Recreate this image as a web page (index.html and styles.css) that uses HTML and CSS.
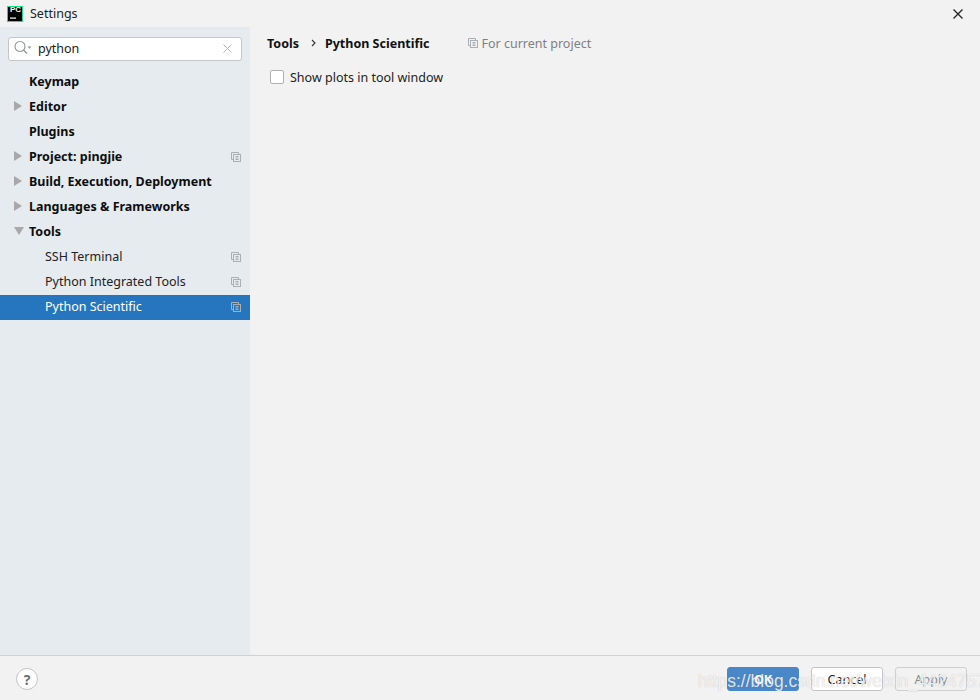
FILE: index.html
```html
<!DOCTYPE html>
<html lang="en">
<head>
<meta charset="utf-8">
<title>Settings</title>
<link rel="stylesheet" href="styles.css">
</head>
<body>
<div class="window">
  <header class="titlebar">
    <svg class="logo" width="16" height="16" viewBox="0 0 16 16"><rect x="0.5" y="0.5" width="15" height="15" fill="#000" stroke="#21d789"/><rect x="3" y="11.5" width="6" height="1.2" fill="#fff"/></svg>
    <span class="logo-text">PC</span>
    <span class="title">Settings</span>
    <svg class="close" width="12" height="12" viewBox="0 0 12 12"><path d="M1.5 1.5l9 9M10.500 1.500l-9 9" stroke="#222" stroke-width="1.300" fill="none"/></svg>
  </header>
  <div class="main">
    <aside class="sidebar">
      <div class="search">
        <svg class="search-icon" width="18" height="16" viewBox="0 0 18 16"><circle cx="6" cy="6.500" r="5" fill="none" stroke="#8f9498" stroke-width="1.100"/><path d="M9.500 10l3.500 3.500" stroke="#8f9498" stroke-width="1.300"/><path d="M13.500 6.500h4l-2 2.200z" fill="#8f9498"/></svg>
        <span class="search-text">python</span>
        <svg class="search-clear" width="9" height="9" viewBox="0 0 9 9"><path d="M.5.500l8 8M8.500.500l-8 8" stroke="#b4b8bb" stroke-width="1"/></svg>
      </div>
      <nav class="tree">
        <div class="row top"><span class="label">Keymap</span></div>
        <div class="row top"><span class="arrow right"></span><span class="label">Editor</span></div>
        <div class="row top"><span class="label">Plugins</span></div>
        <div class="row top"><span class="arrow right"></span><span class="label">Project: pingjie</span>
          <svg class="copy" width="10" height="10" viewBox="0 0 10 10"><use href="#copy-icon"/></svg></div>
        <div class="row top"><span class="arrow right"></span><span class="label">Build, Execution, Deployment</span></div>
        <div class="row top"><span class="arrow right"></span><span class="label">Languages &amp; Frameworks</span></div>
        <div class="row top"><span class="arrow down"></span><span class="label">Tools</span></div>
        <div class="row sub"><span class="label">SSH Terminal</span>
          <svg class="copy" width="10" height="10" viewBox="0 0 10 10"><use href="#copy-icon"/></svg></div>
        <div class="row sub"><span class="label">Python Integrated Tools</span>
          <svg class="copy" width="10" height="10" viewBox="0 0 10 10"><use href="#copy-icon"/></svg></div>
        <div class="row sub selected"><span class="label">Python Scientific</span>
          <svg class="copy" width="10" height="10" viewBox="0 0 10 10"><use href="#copy-icon"/></svg></div>
      </nav>
    </aside>
    <main class="content">
      <div class="crumbs">
        <span class="crumb">Tools</span>
        <svg class="chev" width="5" height="8" viewBox="0 0 5 8"><path d="M1 1l3 3-3 3" fill="none" stroke="#333" stroke-width="1.100"/></svg>
        <span class="crumb">Python Scientific</span>
        <svg class="copy crumb-copy" width="10" height="10" viewBox="0 0 10 10"><use href="#copy-icon"/></svg>
        <span class="scope">For current project</span>
      </div>
      <label class="check-row"><span class="checkbox"></span><span>Show plots in tool window</span></label>
    </main>
  </div>
  <footer class="footer">
    <span class="help">?</span>
    <div class="buttons">
      <span class="btn primary">OK</span>
      <span class="btn">Cancel</span>
      <span class="btn disabled">Apply</span>
    </div>
  </footer>
  <div class="watermark">https://blog.csdn.net/weixin_44247573</div>
</div>
<svg class="defs" width="0" height="0"><defs><g id="copy-icon" fill="none" stroke="#a9afb3" stroke-width="1"><path d="M7.500 2v-1.500h-7v7h1.500"/><rect x="2.500" y="2.500" width="7" height="7"/><path d="M4.500 4.500h3M4.500 6h3M4.500 7.500h3"/></g></defs></svg>
</body>
</html>
```
FILE: styles.css
```css
* { box-sizing: border-box; }
html, body { margin: 0; padding: 0; }
body { width: 980px; height: 700px; overflow: hidden; background: #f2f2f2; font-family: "Noto Sans", "Open Sans", sans-serif; font-size: 12.500px; color: #1a1a1a; }
.window { position: relative; width: 980px; height: 700px; display: flex; flex-direction: column; }
.titlebar { position: relative; height: 27px; flex: none; display: flex; align-items: center; padding: 0 16px 0 7px; }
.logo { flex: none; }
.logo-text { position: absolute; left: 10px; top: 5px; font: bold 8px/10px "Liberation Sans", sans-serif; color: #fff; }
.title { margin-left: 7px; font-size: 12.500px; color: #222; }
.close { margin-left: auto; }
.main { flex: 1; display: flex; min-height: 0; }
.sidebar { width: 250px; flex: none; background: #e6ebf0; padding-top: 10px; }
.search { height: 24px; margin: 0 8px; width: 234px; background: #fff; border: 1px solid #c4c6c8; border-radius: 3px; display: flex; align-items: center; padding: 0 9px 2px 5px; }
.search-text { margin-left: 6px; color: #1a1a1a; }
.search-clear { margin-left: auto; }
.tree { margin-top: 9px; }
.row { position: relative; height: 25px; display: flex; align-items: center; padding-right: 9px; padding-bottom: 2px; white-space: nowrap; }
.row.top { padding-left: 29px; font-weight: 700; color: #0d0d0d; }
.row.sub { padding-left: 45px; color: #222; }
.row.selected { background: #2675bf; color: #fff; }
.arrow { position: absolute; left: 14px; top: 6px; width: 0; height: 0; }
.arrow.right { border-left: 8px solid #a8a8a8; border-top: 5px solid transparent; border-bottom: 5px solid transparent; }
.arrow.down { border-top: 8px solid #a8a8a8; border-left: 5px solid transparent; border-right: 5px solid transparent; top: 7px; }
.copy { margin-left: auto; flex: none; }
.content { flex: 1; padding: 6px 17px; }
.crumbs { height: 20px; display: flex; align-items: center; }
.crumb { font-weight: 700; color: #111; }
.chev { margin: 0 9px 0 12px; }
.crumb-copy { margin-left: 39px; margin-right: 3px; }
.scope { color: #7f7f7f; }
.check-row { display: flex; align-items: center; margin: 14px 0 0 3px; height: 20px; color: #222; }
.checkbox { width: 14px; height: 14px; background: #fff; border: 1px solid #b0b0b0; border-radius: 2px; margin-right: 6px; }
.footer { height: 45px; flex: none; border-top: 1px solid #d1d1d1; display: flex; align-items: center; padding: 2px 13px 0 16px; }
.help { width: 22px; height: 22px; border: 1px solid #c4c4c4; border-radius: 50%; background: #fff; color: #6e6e6e; font-weight: 700; font-size: 14px; display: flex; align-items: center; justify-content: center; }
.buttons { margin-left: auto; display: flex; gap: 12px; }
.btn { width: 72px; height: 24px; border: 1px solid #c4c4c4; border-radius: 3px; background: #fff; display: flex; align-items: center; justify-content: center; color: #222; }
.btn.primary { background: #4a87c8; border-color: #4a87c8; color: #fff; font-weight: 700; }
.btn.disabled { background: transparent; border-color: #cfcfcf; color: #8c8c8c; }
.watermark { position: absolute; left: 698px; top: 671px; font: 17.500px/20px "Liberation Sans", sans-serif; color: rgba(255,255,255,.8); text-shadow: 0 0 1px rgba(110,110,110,.45); white-space: nowrap; }
.defs { position: absolute; }
```
